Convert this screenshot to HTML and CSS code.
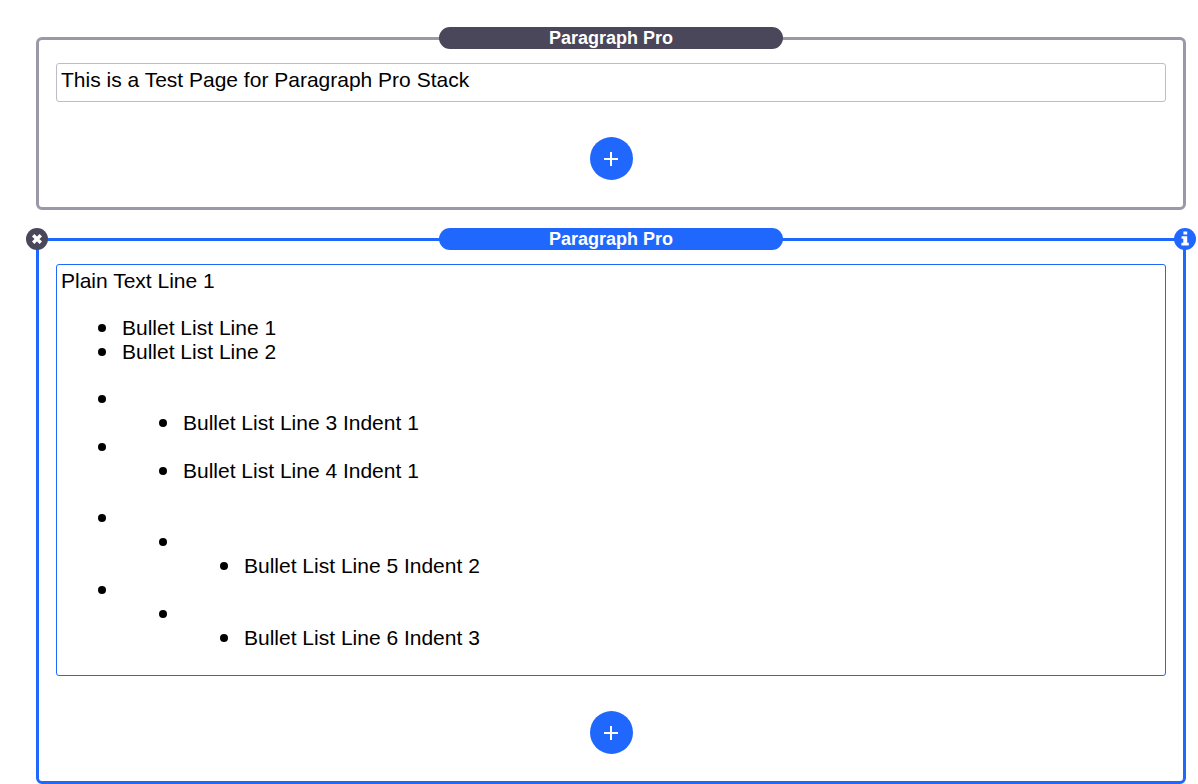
FILE: index.html
```html
<!DOCTYPE html>
<html lang="en">
<head>
    <meta charset="UTF-8">
    <meta name="viewport" content="width=device-width, initial-scale=1.0">
    <title>Paragraph Pro</title>
    <link rel="stylesheet" href="styles.css">
</head>
<body>
    <main class="page">
        <section class="stack">
            <h2 class="stack-label">Paragraph Pro</h2>
            <div class="content">
                <p>This is a Test Page for Paragraph Pro Stack</p>
            </div>
            <button class="add" type="button" aria-label="Add stack">
                <svg viewBox="0 0 16 16" width="16" height="16"><path d="M8 1v14M1 8h14"/></svg>
            </button>
        </section>

        <section class="stack selected">
            <button class="badge remove" type="button" aria-label="Remove stack">
                <svg viewBox="0 0 22 22" width="22" height="22"><path d="M7.2 7.2l7.6 7.6M14.8 7.2l-7.6 7.6"/></svg>
            </button>
            <h2 class="stack-label">Paragraph Pro</h2>
            <button class="badge info" type="button" aria-label="Stack info">
                <svg viewBox="0 0 22 22" width="22" height="22"><path d="M9.4 3.4h3.8v3H9.4zM7.6 8.2h5.6v6.6h1.6v2.7H7.4v-2.7h1.9v-4H7.6z"/></svg>
            </button>
            <div class="content">
                <p>Plain Text Line 1</p>
                <ul>
                    <li>Bullet List Line 1</li>
                    <li>Bullet List Line 2</li>
                </ul>
                <ul>
                    <li>
                        <ul>
                            <li>Bullet List Line 3 Indent 1</li>
                        </ul>
                    </li>
                    <li>
                        <ul>
                            <li>Bullet List Line 4 Indent 1</li>
                        </ul>
                    </li>
                </ul>
                <ul>
                    <li>
                        <ul>
                            <li>
                                <ul>
                                    <li>Bullet List Line 5 Indent 2</li>
                                </ul>
                            </li>
                        </ul>
                    </li>
                    <li>
                        <ul>
                            <li>
                                <ul>
                                    <li>Bullet List Line 6 Indent 3</li>
                                </ul>
                            </li>
                        </ul>
                    </li>
                </ul>
            </div>
            <button class="add" type="button" aria-label="Add stack">
                <svg viewBox="0 0 16 16" width="16" height="16"><path d="M8 1v14M1 8h14"/></svg>
            </button>
        </section>
    </main>
</body>
</html>
```
FILE: styles.css
```css
* {
    box-sizing: border-box;
}

body {
    margin: 0;
    background-color: #fff;
    color: #000;
    font-family: "Liberation Sans", Arial, sans-serif;
    font-size: 21px;
    line-height: 24px;
}

.page {
    display: flex;
    flex-direction: column;
    gap: 28px;
    padding: 37px 12px 0 36px;
}

.stack {
    position: relative;
    display: flex;
    flex-direction: column;
    align-items: center;
    gap: 35px;
    padding: 23px 17px 27px;
    border: 3px solid #9b98a8;
    border-radius: 6px;
}

.stack.selected {
    border-color: #2068fd;
}

/* Name tab sitting on the top border */
.stack-label {
    position: absolute;
    top: -13px;
    left: 35%;
    width: 30%;
    height: 22px;
    margin: 0;
    border-radius: 11px;
    background-color: #4a475a;
    color: #fff;
    font-size: 18px;
    line-height: 22px;
    text-align: center;
}

.selected .stack-label {
    background-color: #2068fd;
}

.content {
    width: 100%;
    min-height: 39px;
    padding: 4px 4px 2px;
    border: 1px solid #bebdc5;
    border-radius: 3px;
}

.selected .content {
    border-color: #2068fd;
}

.content p {
    margin: 0;
}

.content ul {
    margin: 23px 0;
    padding-left: 61px;
    list-style: none;
}

.content ul ul {
    margin: 0;
}

/* Own bullet, so an item without text still keeps its line */
.content li::before {
    content: "";
    display: inline-block;
    width: 8px;
    height: 8px;
    margin: 0 16px 0 -24px;
    border-radius: 50%;
    background-color: #000;
    vertical-align: 3px;
}

button {
    display: flex;
    align-items: center;
    justify-content: center;
    padding: 0;
    border: none;
    border-radius: 50%;
    background-color: #2068fd;
    cursor: pointer;
}

.add {
    width: 43px;
    height: 43px;
}

.add path {
    stroke: #fff;
    stroke-width: 2;
}

/* Round corner buttons of the selected stack */
.badge {
    position: absolute;
    top: -13px;
    width: 22px;
    height: 22px;
}

.remove {
    left: -13px;
    background-color: #4a475a;
}

.remove path {
    stroke: #fff;
    stroke-width: 3.4;
}

.info {
    right: -13px;
}

.info path {
    fill: #fff;
}
```
